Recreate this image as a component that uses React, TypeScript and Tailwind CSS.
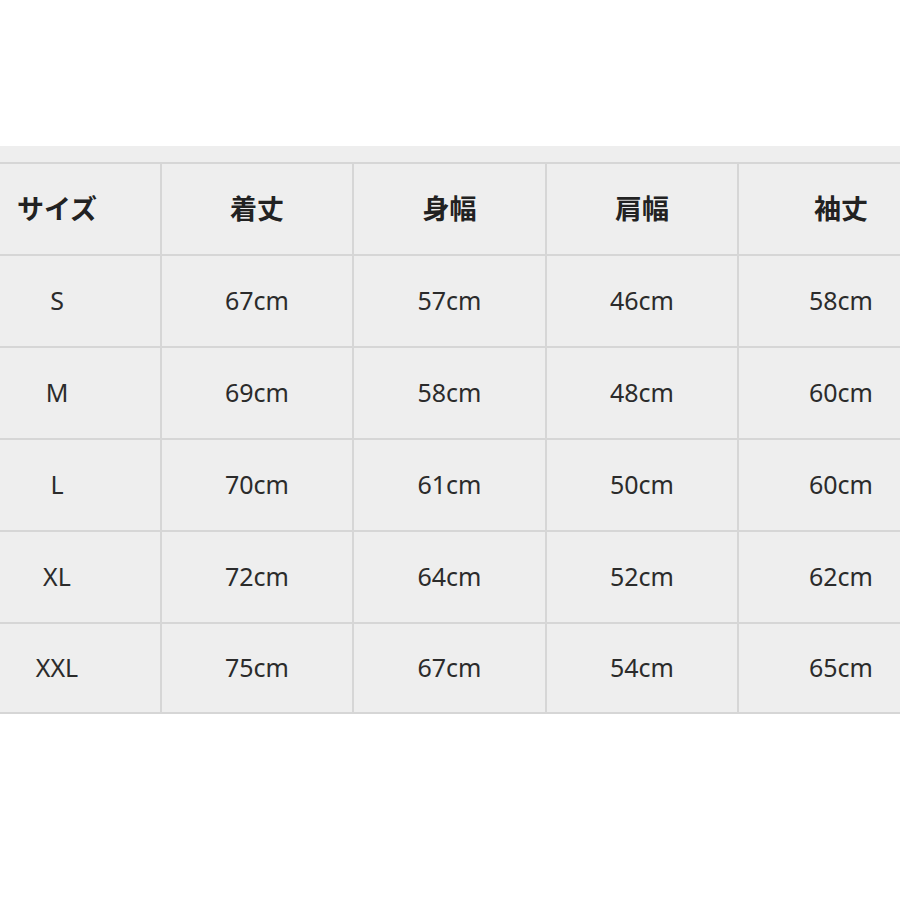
import React from "react";

const HEADERS = ["サイズ", "着丈", "身幅", "肩幅", "袖丈"];

const ROWS = [
  ["S", "67cm", "57cm", "46cm", "58cm"],
  ["M", "69cm", "58cm", "48cm", "60cm"],
  ["L", "70cm", "61cm", "50cm", "60cm"],
  ["XL", "72cm", "64cm", "52cm", "62cm"],
  ["XXL", "75cm", "67cm", "54cm", "65cm"],
];

const COL_WIDTHS = ["w-[160px]", "w-[192px]", "w-[193px]", "w-[192px]", "w-[206px]"];

function Row({ cells, header, last }: { cells: string[]; header?: boolean; last?: boolean }) {
  return (
    <div
      className={`flex h-[92px] border-t-2 border-[#d6d6d6] ${last ? "border-b-2" : ""}`}
    >
      {cells.map((cell, i) => (
        <div
          key={i}
          className={`${COL_WIDTHS[i]} shrink-0 flex items-center ${
            i === 0 ? "justify-center pr-[46px]" : "justify-center border-l-2 border-[#d6d6d6]"
          }`}
        >
          <span
            className={
              header
                ? "text-[27px] font-bold text-[#222222]"
                : "text-[25px] text-[#2b2b2b]"
            }
          >
            {cell}
          </span>
        </div>
      ))}
    </div>
  );
}

export default function App() {
  return (
    <div
      className="h-[900px] w-[900px] overflow-hidden bg-white"
      style={{ fontFamily: '"Noto Sans", "Noto Sans CJK JP", sans-serif' }}
    >
      <div className="mt-[146px] bg-[#eeeeee]">
        <div className="h-[16px]" />
        <Row cells={HEADERS} header />
        {ROWS.map((row, i) => (
          <Row key={row[0]} cells={row} last={i === ROWS.length - 1} />
        ))}
      </div>
    </div>
  );
}
